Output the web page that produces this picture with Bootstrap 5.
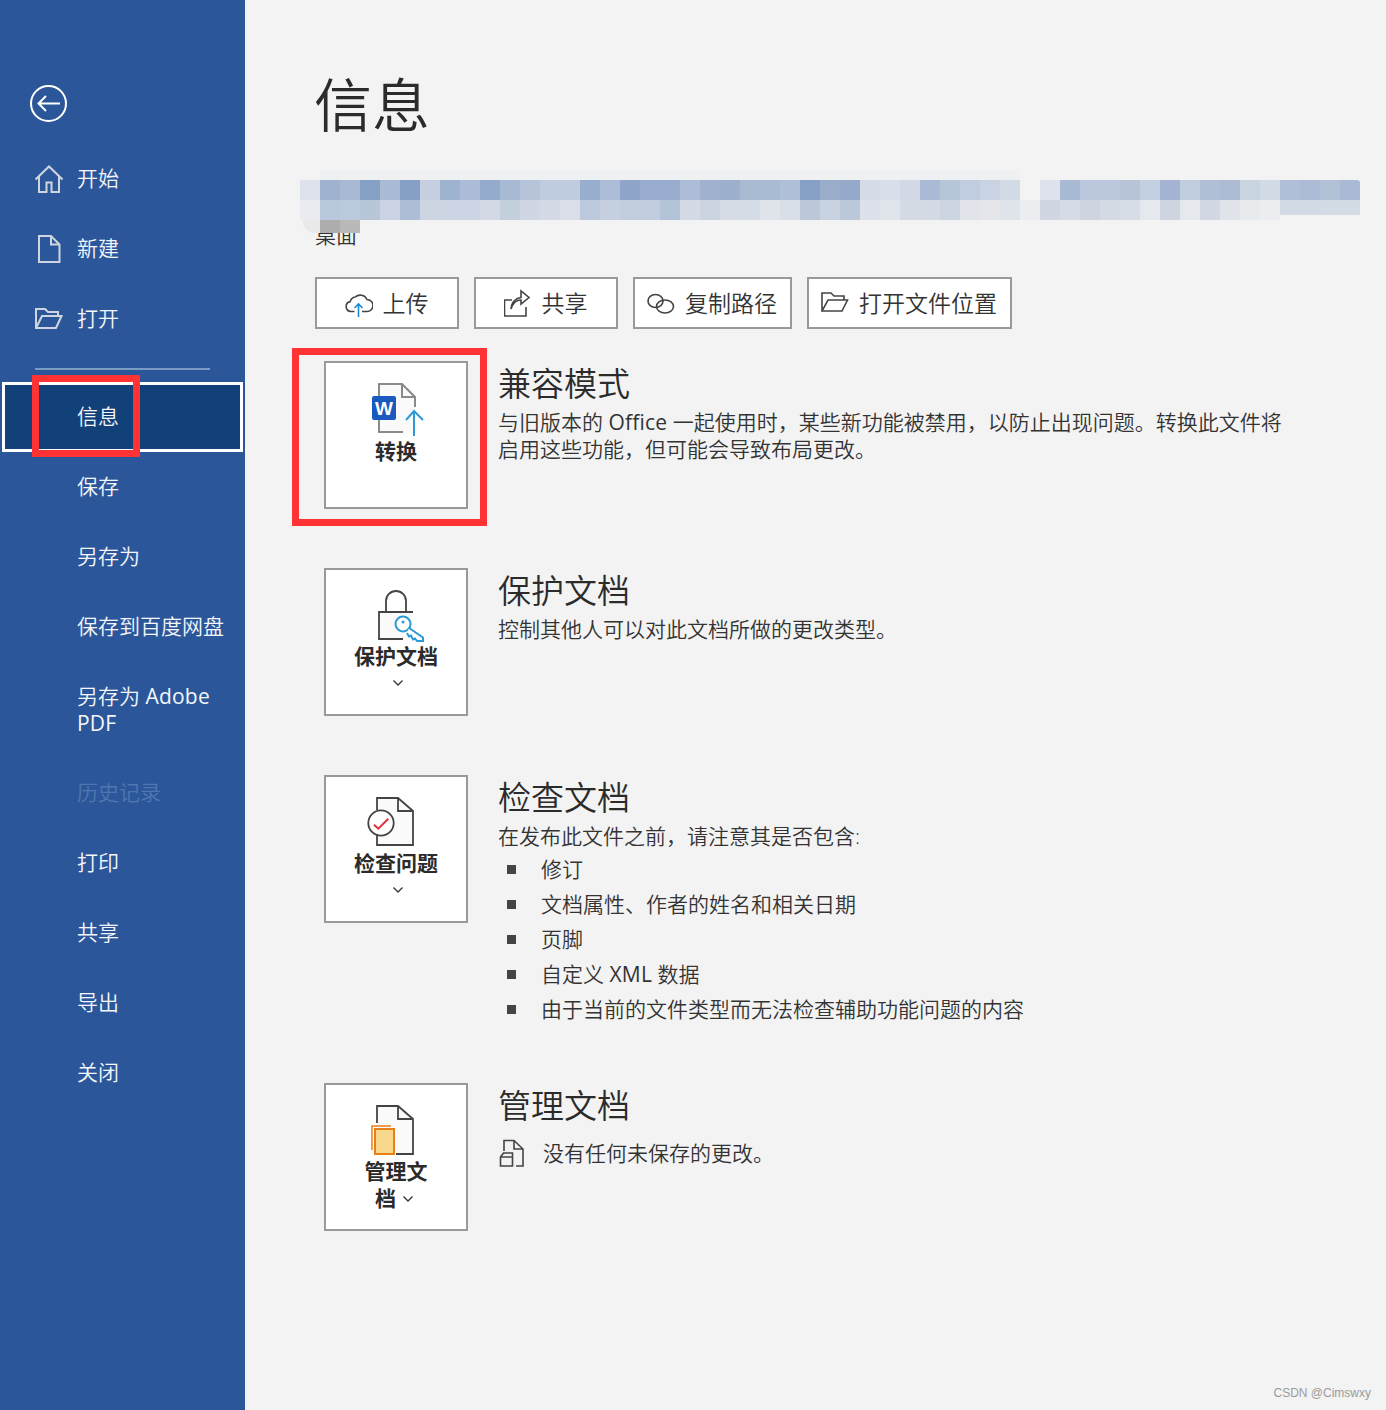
<!DOCTYPE html>
<html lang="zh-CN">
<head>
  <meta charset="UTF-8" />
  <title>信息</title>
  <link href="https://cdn.jsdelivr.net/npm/bootstrap@5.3.0/dist/css/bootstrap.min.css" rel="stylesheet">
  <style>
    body {
      background: #f3f3f3;
      color: #333;
      font-family: "Open Sans", "Noto Sans CJK SC", sans-serif;
      font-weight: 350;
      font-size: 21px;
      line-height: 27px;
      height: 1410px;
      overflow: hidden;
    }
    .latin { font-weight: 400; letter-spacing: .2px; }

    /* left rail */
    .rail {
      width: 245px;
      flex: none;
      background: #2b579a;
      color: #f4f6fa;
      padding-top: 85px;
    }
    .back-link { margin: 0 0 22px 30px; display: block; width: 37px; height: 37px; }
    .rail-item {
      display: flex;
      align-items: center;
      gap: 14px;
      min-height: 70px;
      padding: 0 20px 2px 35px;
    }
    .rail-item svg { flex: none; margin-top: 2px; }
    .rail-text { padding-left: 77px; }
    .rail-tall { padding-top: 21px; padding-bottom: 21px; }
    .rail-off { color: #4f76ae; }
    .rail-sep { height: 2px; background: #7a9bc4; margin: 14px 35px 12px; }
    .rail-on {
      background: #124078;
      border: 3px solid #fff;
      margin: 0 2px;
    }
    .rail-on.rail-text { padding-left: 72px; padding-bottom: 1px; }

    /* content */
    .info-pane { padding: 66px 0 0 70px; flex: 1; position: relative; }
    .info-title { font-size: 58px; line-height: 78px; font-weight: 350; margin: 0 0 26px -1px; color: #2b2b2b; }
    .path-block { position: relative; padding-top: 52px; height: 80px; }
    .mosaic { position: absolute; left: -15px; top: 0; display: block; }
    .act-row { display: flex; gap: 15px; margin: 27px 0 32px; }
    .act-btn {
      display: flex;
      align-items: center;
      justify-content: center;
      gap: 9px;
      height: 52px;
      min-width: 144px;
      padding: 0 13px;
      background: #fff;
      border: 2px solid #999;
      border-radius: 0;
      color: #333;
      font-size: 23px;
      font-weight: 350;
    }
    .act-btn svg { margin: 0 1px 0 -1px; }
    .info-row { display: flex; gap: 30px; margin: 0 0 59px 9px; min-height: 148px; }
    .info-row.row-long { margin-bottom: 56px; }
    .tile {
      flex: none;
      width: 144px;
      height: 148px;
      padding: 20px 0 0;
      background: #fff;
      border: 2px solid #999;
      border-radius: 0;
      color: #2b2b2b;
      font-size: 21px;
      line-height: 27px;
      font-weight: 700;
      display: flex;
      flex-direction: column;
      align-items: center;
      justify-content: flex-start;
    }
    .tile-label { margin-top: 1px; }
    .chev { display: block; margin: 10px 0 0 4px; }
    .chev-inline { display: inline-block; margin: 0 4px 3px 7px; vertical-align: middle; }
    .row-title { font-size: 33px; line-height: 46px; font-weight: 350; margin: 0 0 2px; color: #2b2b2b; }
    .row-text { max-width: 800px; margin: 0; }
    .dot-list { list-style: none; margin: 2px 0 0; padding: 0; }
    .dot-list li { display: flex; align-items: center; height: 35px; gap: 25px; padding-left: 9px; }
    .dot-list li::before { content: ""; width: 9px; height: 9px; background: #444; flex: none; }
    .no-change { display: flex; align-items: center; gap: 18px; margin-top: 10px; }

    /* overlays */
    .red-box { position: absolute; border: 7px solid #ff3333; pointer-events: none; }
    .red-a { left: 32px; top: 375px; width: 108px; height: 82px; }
    .red-b { left: 292px; top: 348px; width: 195px; height: 178px; }
    .stamp { position: absolute; right: 15px; bottom: 9px; font-size: 12px; line-height: 16px; color: #9a9a9a; font-family: "Liberation Sans", sans-serif; font-weight: 400; }
  </style>
</head>
<body class="d-flex position-relative">
  <nav class="rail">
    <a class="back-link" href="#">
      <svg width="37" height="37" viewBox="0 0 37 37" fill="none" stroke="#fff" stroke-width="2"><circle cx="18.5" cy="18.5" r="17.5"/><path d="M30 18.5H9M16 11l-7.5 7.5L16 26"/></svg>
    </a>
    <div class="rail-item">
      <svg width="28" height="28" viewBox="0 0 28 28" fill="none" stroke="#cfd5de" stroke-width="2"><path d="M.5 14.500L14 1.500l13.500 13M4 11.500V27h7.500V17.500h5V27H24V11.500"/></svg>
      <span>开始</span>
    </div>
    <div class="rail-item">
      <svg width="28" height="28" viewBox="0 0 28 28" fill="none" stroke="#cfd5de" stroke-width="2"><path d="M4 1h12l8.500 8.500V27H4zM16 1v8.500h8.500"/></svg>
      <span>新建</span>
    </div>
    <div class="rail-item">
      <svg width="28" height="28" viewBox="0 0 28 28" fill="none" stroke="#cfd5de" stroke-width="2"><path d="M1 23V4h9l3 3h10v4M1 23h20l5.500-12H7L1 23z"/></svg>
      <span>打开</span>
    </div>
    <div class="rail-sep"></div>
    <div class="rail-item rail-on rail-text">信息</div>
    <div class="rail-item rail-text">保存</div>
    <div class="rail-item rail-text">另存为</div>
    <div class="rail-item rail-text">保存到百度网盘</div>
    <div class="rail-item rail-text rail-tall"><span>另存为 <span class="latin">Adobe PDF</span></span></div>
    <div class="rail-item rail-text rail-off">历史记录</div>
    <div class="rail-item rail-text">打印</div>
    <div class="rail-item rail-text">共享</div>
    <div class="rail-item rail-text">导出</div>
    <div class="rail-item rail-text">关闭</div>
  </nav>

  <main class="info-pane">
    <h1 class="info-title">信息</h1>

    <div class="path-block">
      <span>桌面</span>
      <svg id="mosaic" class="mosaic" width="1060" height="63" viewBox="0 0 1060 63"></svg>
    </div>

    <div class="act-row">
      <button type="button" class="btn act-btn">
        <svg width="28" height="28" viewBox="0 0 28 28" fill="none" stroke="#444" stroke-width="1.600"><path d="M9.500 22.500H6a5 5 0 0 1-.8-9.900 6 6 0 0 1 5-4.600A7.500 7.500 0 0 1 22 10.500a6 6 0 0 1 0 12h-5"/><path d="M13.500 28V15M9.500 19l4-4 4 4" stroke="#1e88d2"/></svg>
        <span>上传</span>
      </button>
      <button type="button" class="btn act-btn">
        <svg width="28" height="28" viewBox="0 0 28 28" fill="none" stroke="#444" stroke-width="1.600"><path d="M8 11H.5v16H22v-9"/><path d="M7 20c.5-7 5-11 10-11.500V2l8 6.500-8 6.500v-4c-4 0-8 3-10 9z"/></svg>
        <span>共享</span>
      </button>
      <button type="button" class="btn act-btn">
        <svg width="28" height="28" viewBox="0 0 28 28" fill="none" stroke="#444" stroke-width="1.600"><ellipse cx="8.500" cy="12" rx="7.500" ry="6.500"/><ellipse cx="18" cy="17.500" rx="8.500" ry="6.500"/></svg>
        <span>复制路径</span>
      </button>
      <button type="button" class="btn act-btn">
        <svg width="28" height="28" viewBox="0 0 28 28" fill="none" stroke="#444" stroke-width="1.600"><path d="M1 22V4h9l3 3h10v4M1 22h20l5.500-11H7L1 22z"/></svg>
        <span>打开文件位置</span>
      </button>
    </div>

    <section class="info-row">
      <button type="button" class="btn tile">
        <svg width="64" height="54" viewBox="0 0 64 54" fill="none">
          <path d="M15 14V1h23l13 13v35H15z" fill="#fafafa"/>
          <path d="M15 13V1h23l13 13v10M38 1v13h13M15 37v12h24" stroke="#8a8a8a" stroke-width="2"/>
          <rect x="8" y="13" width="24" height="24" rx="2" fill="#185abd"/>
          <text x="20" y="31.500" text-anchor="middle" fill="#fff" font-family="Liberation Sans" font-weight="700" font-size="19">W</text>
          <path d="M50 53V28M42 37l8-9 9 9" stroke="#2b9ad6" stroke-width="2"/>
        </svg>
        <span class="tile-label">转换</span>
      </button>
      <div>
        <h2 class="row-title">兼容模式</h2>
        <p class="row-text">与旧版本的 <span class="latin">Office</span> 一起使用时，某些新功能被禁用，以防止出现问题。转换此文件将启用这些功能，但可能会导致布局更改。</p>
      </div>
    </section>

    <section class="info-row">
      <button type="button" class="btn tile">
        <svg width="64" height="52" viewBox="0 0 64 52" fill="none">
          <path d="M15 22h34v27H15z" fill="#fafafa"/>
          <path d="M22 22V11a10 10 0 0 1 20 0v11M49 22H15v27h24" stroke="#444" stroke-width="1.800"/>
          <circle cx="39" cy="34" r="7.500" fill="#fff" stroke="#2b9ad6" stroke-width="2"/>
          <circle cx="39" cy="32" r="1.500" fill="#2b9ad6"/>
          <path d="M45 38l14 9.500V51h-6l-2-2.500-2 1-2-4-2 1-2-3.500" fill="#fff" stroke="#2b9ad6" stroke-width="2"/>
        </svg>
        <span class="tile-label">保护文档</span>
        <svg class="chev" width="10" height="6" viewBox="0 0 10 6" fill="none" stroke="#333" stroke-width="1.300"><path d="M.5.5L5 5 9.500.5"/></svg>
      </button>
      <div>
        <h2 class="row-title">保护文档</h2>
        <p class="row-text">控制其他人可以对此文档所做的更改类型。</p>
      </div>
    </section>

    <section class="info-row row-long">
      <button type="button" class="btn tile">
        <svg width="64" height="52" viewBox="0 0 64 52" fill="none">
          <path d="M13 1h21l15 13v34H13z" fill="#fafafa"/>
          <path d="M13 13V1h21l15 13v34H13V38M34 1v13h15" stroke="#444" stroke-width="1.800"/>
          <circle cx="17" cy="26" r="12.700" fill="#fff" stroke="#444" stroke-width="1.800"/>
          <path d="M10 27.700l4.300 4 10-10" stroke="#e8303a" stroke-width="2"/>
        </svg>
        <span class="tile-label">检查问题</span>
        <svg class="chev" width="10" height="6" viewBox="0 0 10 6" fill="none" stroke="#333" stroke-width="1.300"><path d="M.5.5L5 5 9.500.5"/></svg>
      </button>
      <div>
        <h2 class="row-title">检查文档</h2>
        <p class="row-text">在发布此文件之前，请注意其是否包含:</p>
        <ul class="dot-list">
          <li>修订</li>
          <li>文档属性、作者的姓名和相关日期</li>
          <li>页脚</li>
          <li><span>自定义 <span class="latin">XML</span> 数据</span></li>
          <li>由于当前的文件类型而无法检查辅助功能问题的内容</li>
        </ul>
      </div>
    </section>

    <section class="info-row">
      <button type="button" class="btn tile">
        <svg width="64" height="52" viewBox="0 0 64 52" fill="none">
          <path d="M13 1h21l15 13v35H13z" fill="#fafafa"/>
          <path d="M13 18V1h21l15 13v35H32M34 1v13h15" stroke="#444" stroke-width="1.800"/>
          <path d="M8 45V21h19" stroke="#e87f17" stroke-width="1.500"/>
          <rect x="11" y="24" width="19" height="25" fill="#f8d88c" stroke="#e87f17" stroke-width="2"/>
        </svg>
        <span class="tile-label">管理文<br>档<svg class="chev-inline" width="10" height="6" viewBox="0 0 10 6" fill="none" stroke="#333" stroke-width="1.300"><path d="M.5.5L5 5 9.500.5"/></svg></span>
      </button>
      <div>
        <h2 class="row-title">管理文档</h2>
        <div class="no-change">
          <svg width="27" height="28" viewBox="0 0 27 28" fill="none" stroke="#444" stroke-width="1.600"><path d="M6 12V1.500h10l9 8.500v17h-7M16 1.500V10h9"/><path d="M2.500 27V18l3-4h9v13zM2.500 18h12"/></svg>
          <span>没有任何未保存的更改。</span>
        </div>
      </div>
    </section>
  </main>

  <div class="red-box red-a"></div>
  <div class="red-box red-b"></div>
  <div class="stamp">CSDN @Cimswxy</div>

  <script>
    // blurred file name, one colour per 20px cell
    const topRow = 'dde2ec 9fb2d0 a8b9d3 87a0c6 a9bbd5 869fc5 c5cfe0 9eb3cf acbbd6 94abcb a8b9d4 b6c4da bfcce0 bfcce0 98aecf adbdd8 8ea4c8 98acce 98acce adbdd7 9fb1cf 9db0ce a8bbd3 a8bbd3 b0bfd8 87a0c5 99acca 95aacb d5dce7 d8deea d1d9e6 abbbd7 b6c5d8 c0cde0 c9d3e3 d3dbe7 f3f3f3 dde2ec a8b9d4 bac7dc bac7dc b7c4d8 c3d0e1 a3b3d1 c1cee0 b0bfd6 adbbd5 c8d4e0 d3dbe7 b0bfd7 adbbd6 b3c1d6'.split(' ');
    const lowRow = 'e9ebf0 b9c8dc bac9dc b8c6da c9d3e3 adbdd6 cdd5e3 ccd5e4 ccd5e4 d3d9e5 c3cfdc d0d7e4 d4dae6 dadfe9 bcc9dd c6d0e0 c2cede c1cddf b3c4d8 d5dbe6 cdd4e1 d6dce6 d4dce6 e0e4ea d9dfe8 bcc8da c9d2e1 bbc8d9 dde2ea e0e4eb d4dbe5 d4dbe5 cdd4e2 e1e4eb e4e6ea dfe3ea ebedf0 d0d6e2 d6dce6 ced5e1 d5dbe5 d6dde7 e5e8ec ced5e1 e5e8ec d1d8e4 e0e3ea e8ebee ecedf0 d2dae6 d2dae6 d3dbe5 d3dbe5'.split(' ');
    let cells = '<rect x="3" y="28" width="30" height="35" rx="12" fill="#e9e9e9"/>';
    cells += '<rect x="20" y="0" width="700" height="10" fill="#eff0f2"/>';
    topRow.forEach((c, i) => {
      cells += `<rect x="${i * 20}" y="10" width="20" height="20" fill="#${c}"/>`;
    });
    cells += '<path d="M1040 10h17q3 0 3 3v17h-20z" fill="#aab9d4"/>';
    lowRow.forEach((c, i) => {
      const h = i > 48 ? 15 : 20;
      cells += `<rect x="${i * 20}" y="30" width="20" height="${h}" fill="#${c}"/>`;
    });
    cells += '<rect x="20" y="50" width="20" height="13" fill="#adadad"/><rect x="40" y="50" width="20" height="13" fill="#b9b9b9"/>';
    document.getElementById('mosaic').innerHTML = cells;
  </script>
  <script src="https://cdn.jsdelivr.net/npm/bootstrap@5.3.0/dist/js/bootstrap.bundle.min.js"></script>
</body>
</html>
